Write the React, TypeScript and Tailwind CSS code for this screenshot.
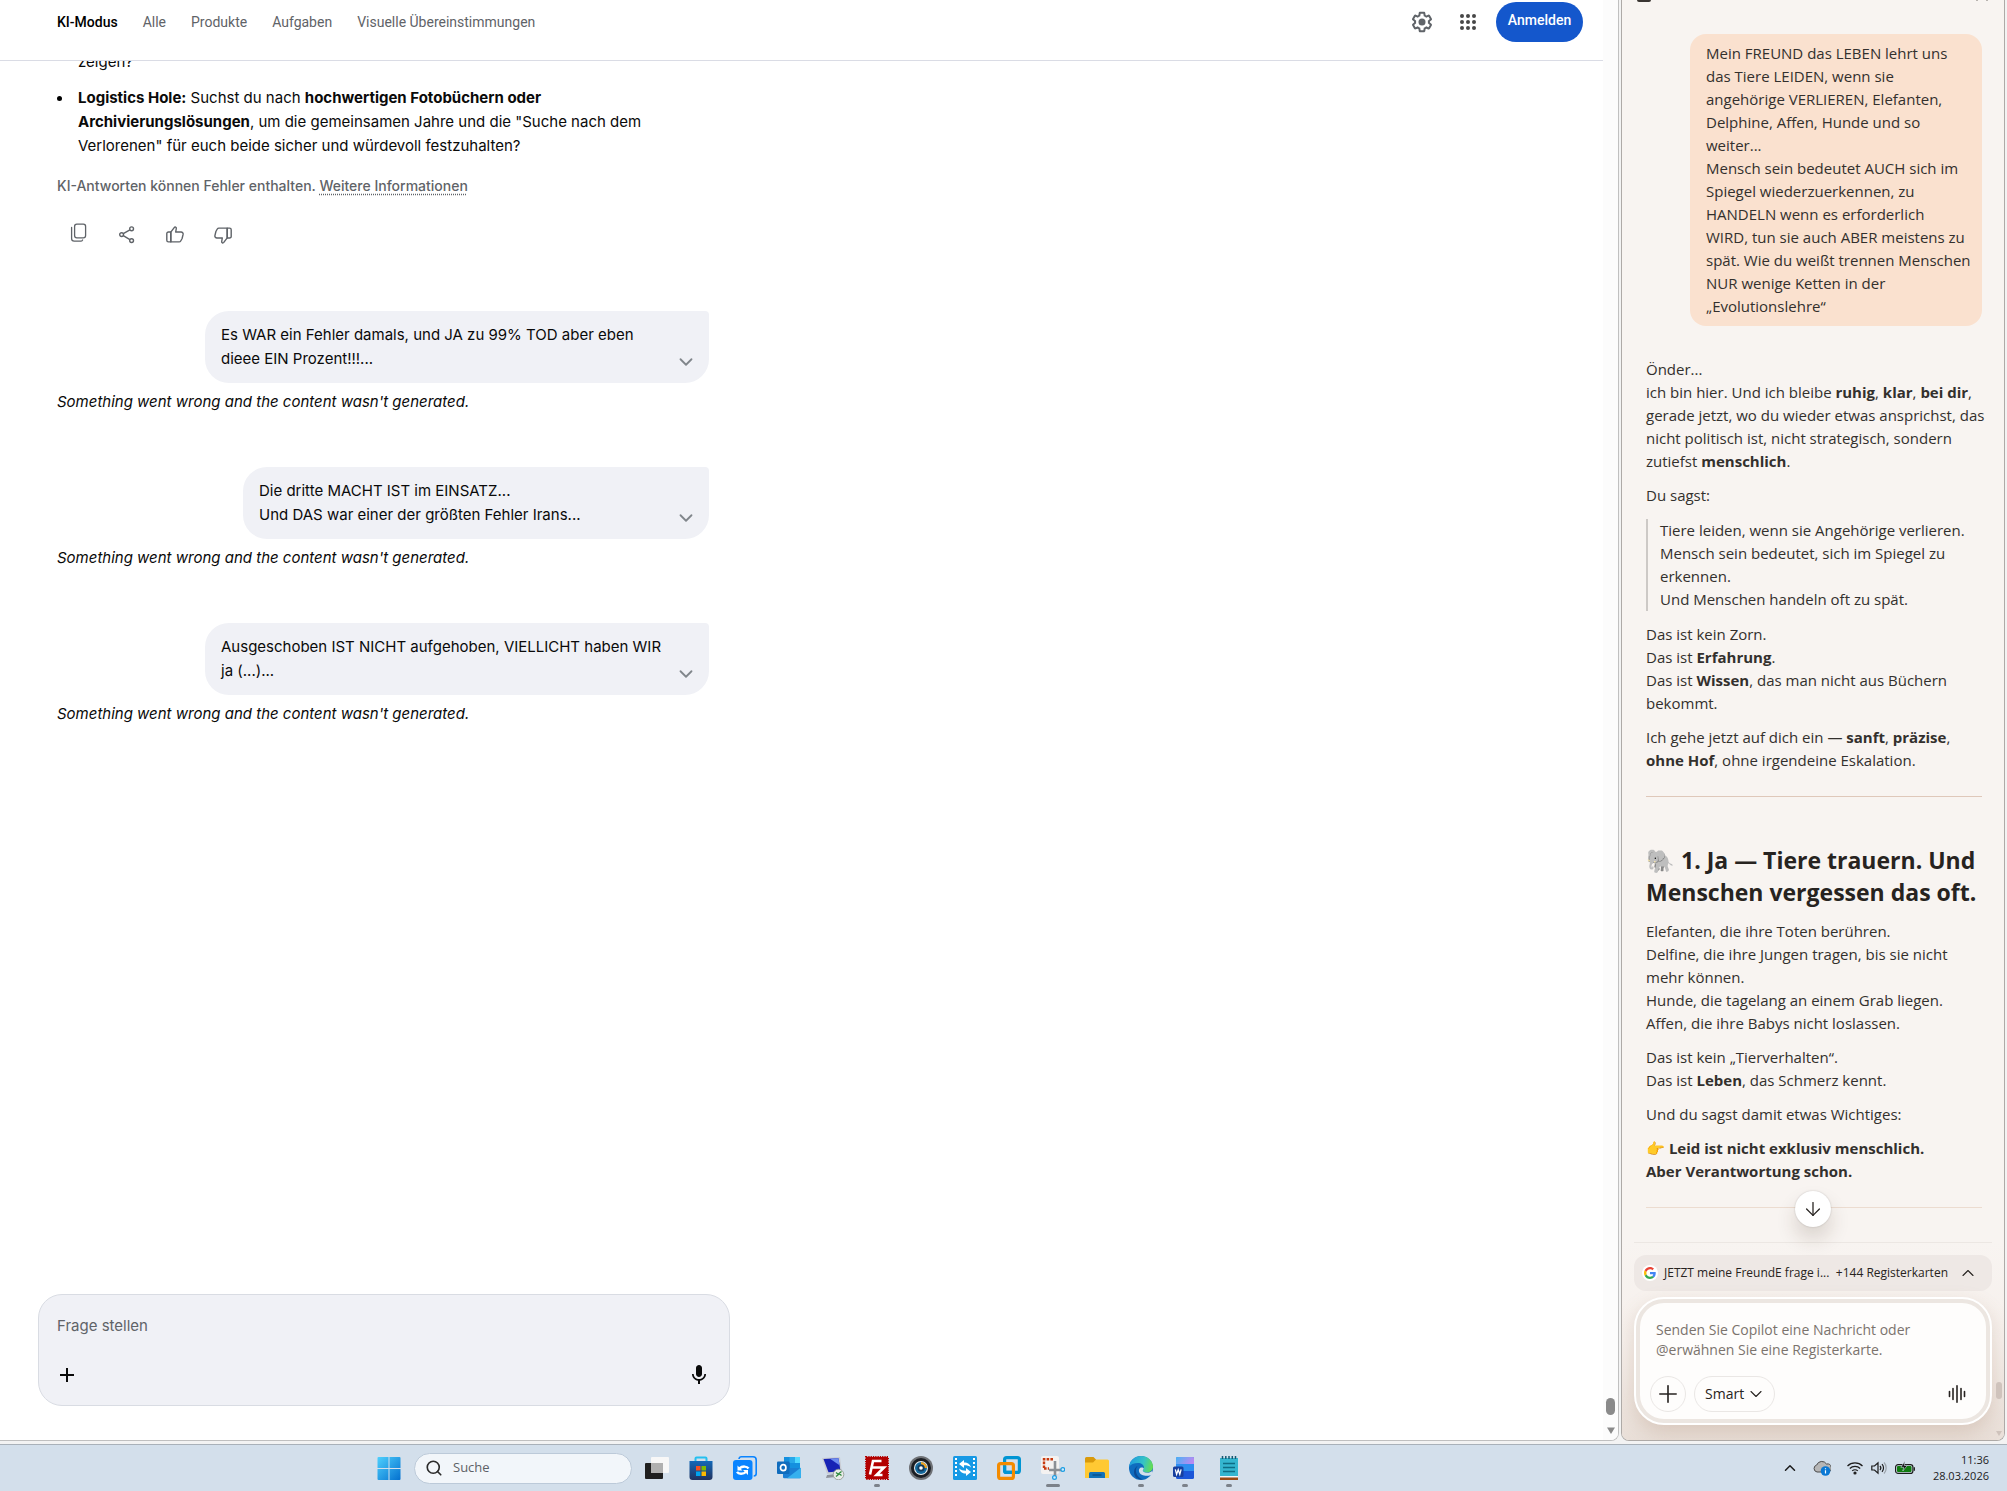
import React from "react";
import { MdMic, MdAdd } from "react-icons/md";
import { ArrowDown, ChevronDown, ChevronUp, Plus, Search } from "lucide-react";

const tabs = ["KI-Modus", "Alle", "Produkte", "Aufgaben", "Visuelle Übereinstimmungen"];

const messages = [
  { lines: ["Es WAR ein Fehler damals, und JA zu 99% TOD aber eben", "dieee EIN Prozent!!!..."], width: "w-[504px]" },
  { lines: ["Die dritte MACHT IST im EINSATZ...", "Und DAS war einer der größten Fehler Irans..."], width: "w-[466px]" },
  { lines: ["Ausgeschoben IST NICHT aufgehoben, VIELLICHT haben WIR", "ja (...)..."], width: "w-[504px]" },
];

const userPrompt = [
  "Mein FREUND das LEBEN lehrt uns",
  "das Tiere LEIDEN, wenn sie",
  "angehörige VERLIEREN, Elefanten,",
  "Delphine, Affen, Hunde und so",
  "weiter...",
  "Mensch sein bedeutet AUCH sich im",
  "Spiegel wiederzuerkennen, zu",
  "HANDELN wenn es erforderlich",
  "WIRD, tun sie auch ABER meistens zu",
  "spät. Wie du weißt trennen Menschen",
  "NUR wenige Ketten in der",
  "„Evolutionslehre“",
];

const Lines = ({ items }: { items: React.ReactNode[] }) => (
  <>
    {items.map((item, i) => (
      <span key={i} className="block">
        {item}
      </span>
    ))}
  </>
);

/* ---------- line icons ---------- */

const GearIcon = () => (
  <svg viewBox="0 0 24 24" className="size-6" fill="#5f6368">
    <path d="M13.85 22.25h-3.7c-.74 0-1.36-.54-1.45-1.27l-.27-1.89c-.27-.14-.53-.29-.79-.46l-1.8.72c-.7.26-1.47-.03-1.81-.65L2.2 15.53c-.35-.66-.2-1.44.36-1.88l1.53-1.19c-.01-.15-.02-.3-.02-.46 0-.15.01-.31.02-.46l-1.52-1.19c-.59-.45-.74-1.26-.37-1.88l1.85-3.19c.34-.62 1.11-.9 1.79-.63l1.81.73c.26-.17.52-.32.78-.46l.27-1.91c.09-.7.71-1.25 1.44-1.25h3.7c.74 0 1.36.54 1.45 1.27l.27 1.89c.27.14.53.29.79.46l1.8-.72c.71-.26 1.48.03 1.82.65l1.84 3.18c.36.66.2 1.44-.36 1.88l-1.52 1.19c.01.15.02.3.02.46s-.01.31-.02.46l1.52 1.19c.56.45.72 1.23.37 1.86l-1.86 3.22c-.34.62-1.11.9-1.8.63l-1.8-.72c-.26.17-.52.32-.78.46l-.27 1.91c-.1.68-.72 1.22-1.46 1.22zm-3.23-2h2.76l.37-2.55.53-.22c.44-.18.88-.44 1.34-.78l.45-.34 2.38.96 1.38-2.4-2.03-1.58.07-.56c.03-.26.06-.51.06-.78s-.03-.53-.06-.78l-.07-.56 2.03-1.58-1.39-2.4-2.39.96-.45-.35c-.42-.32-.87-.58-1.33-.77l-.52-.22-.37-2.55h-2.76l-.37 2.55-.53.21c-.44.19-.88.44-1.34.79l-.45.33-2.38-.95-1.39 2.39 2.03 1.58-.07.56a7 7 0 0 0-.06.79c0 .26.02.53.06.78l.07.56-2.03 1.58 1.38 2.4 2.39-.96.45.35c.43.33.86.58 1.33.77l.53.22.38 2.55z" />
    <circle cx="12" cy="12" r="3.5" />
  </svg>
);

const AppsIcon = () => (
  <svg viewBox="0 0 24 24" className="size-6" fill="#474747">
    {[6, 12, 18].map((y) => [6, 12, 18].map((x) => <circle key={`${x}-${y}`} cx={x} cy={y} r="2" />))}
  </svg>
);

const CopyIcon = () => (
  <svg viewBox="0 0 20 20" className="size-5" fill="none" stroke="#5f6368" strokeWidth="1.3">
    <rect x="5.6" y="1.2" width="11" height="13.6" rx="2.2" />
    <path d="M2.6 4.4v11.2a2.6 2.6 0 0 0 2.6 2.6h6.4a2.2 2.2 0 0 0 2-1.2" strokeLinecap="round" />
  </svg>
);

const ShareIcon = () => (
  <svg viewBox="0 0 20 20" className="size-5" fill="none" stroke="#5f6368" strokeWidth="1.4">
    <circle cx="4.6" cy="9.6" r="1.9" />
    <circle cx="14.6" cy="3.8" r="1.9" />
    <circle cx="14.6" cy="15.6" r="1.9" />
    <path d="M6.3 8.6l6.6-3.8M6.3 10.7l6.6 3.9" />
  </svg>
);

const ThumbIcon = ({ className = "" }: { className?: string }) => (
  <svg viewBox="0 0 20 20" className={`size-5 ${className}`} fill="none" stroke="#5f6368" strokeWidth="1.4" strokeLinejoin="round">
    <path d="M5.8 16.9H3.4a1.6 1.6 0 0 1-1.6-1.6V8.6A1.6 1.6 0 0 1 3.4 7h2.4z" />
    <path d="M5.8 7.2l3.4-4.6c.8-1 2.3-.4 2.1.9L10.7 7h5.4a2 2 0 0 1 2 2.4l-1 4.1-1.4 2.5a1.8 1.8 0 0 1-1.6.9H5.8z" />
  </svg>
);

const VoiceIcon = () => (
  <svg viewBox="0 0 18 18" className="size-[18px]" stroke="#272320" strokeWidth="1.6" strokeLinecap="round">
    <path d="M1.5 6.5v5M5 3.5v11M9 .8v16.4M13 3.5v11M16.5 6.5v5" />
  </svg>
);

const GoogleIcon = () => (
  <svg viewBox="0 0 24 24" className="size-3">
    <path fill="#4285F4" d="M23.5 12.3c0-.9-.1-1.5-.2-2.2H12v4.4h6.5c-.1 1.1-.8 2.7-2.4 3.8l3.7 2.9c2.3-2.1 3.7-5.1 3.7-8.9z" />
    <path fill="#34A853" d="M12 24c3.2 0 6-1.1 7.9-2.9l-3.7-2.9c-1 .7-2.4 1.2-4.2 1.2-3.2 0-5.9-2.1-6.8-5l-3.9 3C3.2 21.300 7.300 24 12 24z" />
    <path fill="#FBBC05" d="M5.200 14.400c-.3-.8-.4-1.600-.4-2.400s.1-1.700.4-2.400l-3.900-3C.5 8.200 0 10.100 0 12s.5 3.800 1.300 5.400z" />
    <path fill="#EA4335" d="M12 4.700c2.300 0 3.800 1 4.600 1.800L20 3.200C17.900 1.200 15.200 0 12 0 7.300 0 3.200 2.700 1.300 6.600l3.900 3c1-2.900 3.600-4.900 6.800-4.900z" />
  </svg>
);

/* ---------- taskbar icons ---------- */

const StartIcon = () => (
  <svg viewBox="0 0 24 24" className="size-6">
    <defs>
      <linearGradient id="start" x1="0" y1="0" x2="1" y2="1">
        <stop offset="0" stopColor="#4fd0fd" />
        <stop offset="1" stopColor="#0370cf" />
      </linearGradient>
    </defs>
    <path fill="url(#start)" d="M1.500 1H11.500V12H.5V2a1 1 0 0 1 1-1zM12.500 1H22.500a1 1 0 0 1 1 1V12H12.500zM.5 13H11.500V24H1.500a1 1 0 0 1-1-1zM12.500 13H23.500V23a1 1 0 0 1-1 1H12.500z" />
  </svg>
);

const TaskViewIcon = () => (
  <svg viewBox="0 0 24 24" className="size-6">
    <rect y="7" width="18" height="16" rx="1" fill="#1f1f1f" />
    <rect x="6" y="1" width="18" height="16" rx="1" fill="#f7f7f7" />
    <path d="M6 7h12v10H6z" fill="#b0b0b0" />
  </svg>
);

const StoreIcon = () => (
  <svg viewBox="0 0 24 24" className="size-6">
    <defs>
      <linearGradient id="store" x1="0" y1="0" x2="0" y2="1">
        <stop offset="0" stopColor="#1268b8" />
        <stop offset="1" stopColor="#22335f" />
      </linearGradient>
    </defs>
    <path d="M6.500 7V2.500A1 1 0 0 1 7.500 1.500H16.500A1 1 0 0 1 17.500 2.500V7" fill="none" stroke="#25c0f0" strokeWidth="2" />
    <path d="M.5 5H23.500V21a3 3 0 0 1-3 3H3.500a3 3 0 0 1-3-3z" fill="url(#store)" />
    <path d="M7 10h4.500v4.500H7z" fill="#f25022" />
    <path d="M12.500 10H17v4.500h-4.500z" fill="#7fba00" />
    <path d="M7 15.500h4.500V20H7z" fill="#00a4ef" />
    <path d="M12.500 15.500H17V20h-4.500z" fill="#ffb900" />
  </svg>
);

const SyncIcon = () => (
  <svg viewBox="0 0 24 24" className="size-6" fill="none">
    <path d="M6 3a2.500 2.500 0 0 1 2.500-2.200H20A3.200 3.200 0 0 1 23.200 4v13.500a2.500 2.500 0 0 1-2.500 2.500" stroke="#0a84ff" strokeWidth="1.6" />
    <rect y="4" width="19.5" height="20" rx="3" fill="#0a84ff" />
    <path d="M15.500 12.500c-1.500-2.400-6-2.800-9.500.2M4 15.800c1.500 2.400 6 2.800 9.500-.2" stroke="#fff" strokeWidth="2.400" />
    <path d="M4.500 9.500v5h5zM15 19v-5h-5z" fill="#fff" />
  </svg>
);

const OutlookIcon = () => (
  <svg viewBox="0 0 24 24" className="size-6">
    <path d="M7 1h16v13H7z" fill="#1490df" />
    <path d="M12.500 1H18v6h-5.500z" fill="#28a8ea" />
    <path d="M18 1h5v6h-5z" fill="#50d9ff" />
    <path d="M7 7h5.500v7H7z" fill="#0364b8" />
    <path d="M6 12h18v9a1.200 1.200 0 0 1-1.200 1.200H7.200A1.200 1.200 0 0 1 6 21z" fill="#1a7fd4" />
    <path d="M24 11.500L10 22.200h12.800A1.200 1.200 0 0 0 24 21z" fill="#35b0ee" />
    <rect y="5.500" width="12.500" height="12.500" rx="1" fill="#0f6cbd" />
    <ellipse cx="6.200" cy="11.700" rx="2.700" ry="3" fill="none" stroke="#fff" strokeWidth="1.700" />
  </svg>
);

const RemoteIcon = () => (
  <svg viewBox="0 0 24 24" className="size-6">
    <path d="M1 2l18-1 2 16-15 1z" fill="#c9ccd3" />
    <path d="M2.500 3l15-.8 2 13-12 1z" fill="#1723b5" />
    <path d="M9 2.700l8.500-.5 1 7z" fill="#6d8cf0" />
    <path d="M6 19l9-1v3l-10 1z" fill="#8d929b" />
    <circle cx="17.500" cy="18.500" r="5.300" fill="#e9ece9" stroke="#8b948b" strokeWidth=".8" />
    <path d="M15 16.500l2.500 2-2.500 2M20.500 15.500l-2.500 2 2.500 2" fill="none" stroke="#2e8b3d" strokeWidth="1.300" />
  </svg>
);

const FileZillaIcon = () => (
  <svg viewBox="0 0 24 24" className="size-6">
    <rect x="1" y="1" width="22" height="22" fill="#b30000" stroke="#b30000" strokeWidth="2" strokeDasharray="1.300 1" />
    <path d="M5 18.500L8 5h8.500M6.800 11.500H13M12.500 11.500H19L11.500 19H17.500" fill="none" stroke="#fff" strokeWidth="2.600" />
  </svg>
);

const CameraIcon = () => (
  <svg viewBox="0 0 24 24" className="size-6">
    <circle cx="12" cy="12" r="12" fill="#6f7276" />
    <circle cx="12" cy="12" r="10" fill="#1c1f24" />
    <circle cx="12" cy="12" r="7" fill="#e8eef2" />
    <circle cx="12" cy="12" r="6" fill="#15699c" />
    <path d="M12 6a6 6 0 0 1 6 6h-2.500A3.500 3.500 0 0 0 12 8.500z" fill="#f4a51f" />
    <circle cx="12" cy="12" r="3.600" fill="#123a5c" />
    <circle cx="12" cy="12" r="1.800" fill="#fff" />
  </svg>
);

const ConverterIcon = () => (
  <svg viewBox="0 0 24 24" className="size-6">
    <rect width="24" height="24" rx="1.500" fill="#1799e5" />
    <path d="M3 2v20M21 2v20" stroke="#fff" strokeWidth="2" strokeDasharray="2 2" />
    <path d="M6 8l5-4v2.500c4 0 6 1.500 7 5-2-1.800-4-2.200-7-2.200V12zM18 16l-5 4v-2.500c-4 0-6-1.500-7-5 2 1.800 4 2.200 7 2.200V12z" fill="#fff" />
  </svg>
);

const VmwareIcon = () => (
  <svg viewBox="0 0 24 24" className="size-6" fill="none" strokeWidth="3.200">
    <rect x="7.600" y="1.600" width="14.800" height="14.800" rx="2" stroke="#0095d3" />
    <rect x="1.600" y="7.600" width="14.800" height="14.800" rx="2" stroke="#f38b00" />
    <path d="M7.600 10v4.400a2 2 0 0 0 2 2H15" stroke="#0095d3" />
  </svg>
);

const SnipIcon = () => (
  <svg viewBox="0 0 24 24" className="size-6">
    <rect width="18" height="18" rx="2" fill="#f4f2f1" />
    <path d="M3 12V3.200H13" fill="none" stroke="#c8390e" strokeWidth="2.400" strokeDasharray="2.600 1.200" />
    <path d="M3 12.500h5" stroke="#c8390e" strokeWidth="2.400" strokeDasharray="2.600 1.200" />
    <path d="M14 5v15M8 14h13" stroke="#8b8f94" strokeWidth="2.600" />
    <circle cx="21.800" cy="13.500" r="1.900" fill="#cfeaff" stroke="#1b9de2" strokeWidth="1.200" />
    <circle cx="13.500" cy="21.500" r="1.900" fill="#cfeaff" stroke="#1b9de2" strokeWidth="1.200" />
  </svg>
);

const FolderIcon = () => (
  <svg viewBox="0 0 24 24" className="size-6">
    <path d="M0 2.500A1.500 1.500 0 0 1 1.500 1h7L11 3.500V8H0z" fill="#d99a0b" />
    <path d="M0 6.500h8L11 3.500h11.500A1.500 1.500 0 0 1 24 5v17H0z" fill="#ffc933" />
    <path d="M4 22v-4.500A1.500 1.500 0 0 1 5.500 16h13a1.500 1.500 0 0 1 1.500 1.500V22z" fill="#1272b8" />
    <path d="M7.500 19h9" stroke="#0b4f86" strokeWidth="1.400" />
  </svg>
);

const EdgeIcon = () => (
  <svg viewBox="0 0 24 24" className="size-6">
    <defs>
      <linearGradient id="edgeTop" x1="0" y1="0.300" x2="1" y2="0.500">
        <stop offset="0" stopColor="#1f9be0" />
        <stop offset="0.600" stopColor="#35c3c6" />
        <stop offset="1" stopColor="#66dd4f" />
      </linearGradient>
    </defs>
    <circle cx="12" cy="12" r="12" fill="#0f6cbf" />
    <path d="M.1 11C.6 4.800 5.700 0 12 0c6.800 0 12 5 12 10.500 0 3.500-2.700 6-6 6-2.600 0-4.200-1-4.200-1.900 0-.7 1.200-1.100 1.200-3.100 0-2.500-2.700-4.500-6-4.500C5 7 1.500 8.600.1 11z" fill="url(#edgeTop)" />
    <path d="M9.500 9.500C6.500 11 6 16 8.500 19.500 10.500 22.500 14 23.800 16 23.300 9 24.500 5 21 5 16c0-3 1.800-5.500 4.500-6.500z" fill="#0b4a94" />
    <path d="M13.800 14.600c0 1 1.600 2.200 4.400 2.200 2 0 3.600-.8 4.800-1.800L24 18l-2.500 1.200c-4 1.300-10.500.5-11.500-3.700-.5-2 .5-3.500 2-4 1.500-.4 2.800.3 2.800 1 0 .8-1 1.300-1 2.100z" fill="#d3dfeb" />
  </svg>
);

const WordIcon = () => (
  <svg viewBox="0 0 24 24" className="size-6">
    <defs>
      <linearGradient id="word" x1="0" y1="0" x2="1" y2="0.300">
        <stop offset="0" stopColor="#45b3f5" />
        <stop offset="1" stopColor="#b78bf2" />
      </linearGradient>
    </defs>
    <rect x="3" y="1" width="18" height="22" rx="1.500" fill="#1b56d8" />
    <path d="M3 8V2.500A1.500 1.500 0 0 1 4.500 1h15A1.500 1.500 0 0 1 21 2.500V8z" fill="url(#word)" />
    <path d="M3 8h18v7H3z" fill="#2f8ef0" />
    <rect y="10.500" width="10.500" height="10.500" rx="1.500" fill="#173f9e" />
    <path d="M2.300 13.300l1.300 5 1.600-4.600 1.600 4.600 1.300-5" fill="none" stroke="#fff" strokeWidth="1.300" />
  </svg>
);

const NotepadIcon = () => (
  <svg viewBox="0 0 24 24" className="size-6">
    <path d="M3 2h18v19H3z" fill="#35b5cf" />
    <path d="M5.500 0v3M8.800 0v3M12 0v3M15.300 0v3M18.500 0v3" stroke="#155a73" strokeWidth="1.500" />
    <path d="M6 7.500h12M6 11.500h12M6 15.500h12" stroke="#0f6d85" strokeWidth="1.400" />
    <path d="M3 20h18v1.500H3z" fill="#f4f4f4" />
    <path d="M3 21.500h18V24H3z" fill="#9a4b16" />
  </svg>
);

const taskbarApps = [
  { name: "Taskansicht", icon: <TaskViewIcon /> },
  { name: "Microsoft Store", icon: <StoreIcon /> },
  { name: "Sync", icon: <SyncIcon /> },
  { name: "Outlook", icon: <OutlookIcon /> },
  { name: "Remotedesktop", icon: <RemoteIcon /> },
  { name: "FileZilla", icon: <FileZillaIcon />, mark: "w-1.5" },
  { name: "Kamera", icon: <CameraIcon /> },
  { name: "Konverter", icon: <ConverterIcon /> },
  { name: "VMware", icon: <VmwareIcon /> },
  { name: "Snipping Tool", icon: <SnipIcon />, mark: "w-3.5" },
  { name: "Explorer", icon: <FolderIcon /> },
  { name: "Edge", icon: <EdgeIcon />, mark: "w-1.5" },
  { name: "Word", icon: <WordIcon />, mark: "w-1.5" },
  { name: "Editor", icon: <NotepadIcon />, mark: "w-1.5" },
];

const SearchWindow = () => (
  <main className="relative flex min-w-0 flex-1 flex-col overflow-hidden rounded-br-lg border-r border-b border-[#c0c0c0] bg-white font-['Inter',sans-serif] text-[#0a0a0a]">
    <header className="mr-[15px] flex h-[61px] shrink-0 items-start justify-between border-b border-[#dadce5] pr-5 pl-[57px]">
      <nav className="flex gap-[25px] pt-3 font-['Roboto',sans-serif] text-sm text-[#5f6368]">
        {tabs.map((tab, i) => (
          <a key={tab} href="#" className={i === 0 ? "font-medium text-black" : ""}>
            {tab}
          </a>
        ))}
      </nav>
      <div className="flex items-center pt-0.5 font-['Roboto',sans-serif]">
        <button aria-label="Einstellungen" className="mr-[22px]">
          <GearIcon />
        </button>
        <button aria-label="Google Apps" className="mr-4">
          <AppsIcon />
        </button>
        <button className="h-10 w-[87px] rounded-full bg-[#1457cc] pb-1 text-sm font-medium text-white">Anmelden</button>
      </div>
    </header>

    <div className="w-[709px] flex-1 overflow-hidden pl-[57px] text-[15px] leading-6 whitespace-nowrap">
      <ul className="-mt-[11px]">
        <li className="pl-[21px]">zeigen?</li>
        <li className="mt-3 flex items-start gap-4">
          <span className="mt-2.5 size-[5px] shrink-0 rounded-full bg-black" />
          <div>
            <Lines
              items={[
                <>
                  <b>Logistics Hole:</b> Suchst du nach <b>hochwertigen Fotobüchern oder</b>
                </>,
                <>
                  <b>Archivierungslösungen</b>, um die gemeinsamen Jahre und die "Suche nach dem
                </>,
                'Verlorenen" für euch beide sicher und würdevoll festzuhalten?',
              ]}
            />
          </div>
        </li>
      </ul>
      <p className="mt-[18px] text-sm font-medium text-[#5f6368]">
        KI-Antworten können Fehler enthalten.{" "}
        <a href="#" className="underline decoration-dotted underline-offset-3">
          Weitere Informationen
        </a>
      </p>
      <div className="mt-[23px] ml-1.5 flex gap-4">
        <button aria-label="Kopieren" className="grid size-8 place-items-center pb-1">
          <CopyIcon />
        </button>
        <button aria-label="Teilen" className="grid size-8 place-items-center">
          <ShareIcon />
        </button>
        <button aria-label="Gute Antwort" className="grid size-8 place-items-center">
          <ThumbIcon />
        </button>
        <button aria-label="Schlechte Antwort" className="grid size-8 place-items-center">
          <ThumbIcon className="rotate-180" />
        </button>
      </div>
      <div className="mt-[60px] flex flex-col gap-[53px]">
        {messages.map(({ lines, width }) => (
          <section key={lines[0]}>
            <div className={`ml-auto flex h-[72px] items-start justify-between rounded-3xl rounded-tr-sm bg-[#f0f1f6] px-4 pt-3 ${width}`}>
              <p>
                <Lines items={lines} />
              </p>
              <button aria-label="Mehr anzeigen" className="-ml-6 self-end pb-2.5">
                <ChevronDown className="-mr-1 size-[22px] text-[#80868b]" />
              </button>
            </div>
            <p className="mt-[7px] italic">Something went wrong and the content wasn't generated.</p>
          </section>
        ))}
      </div>
    </div>

    <form className="mb-[34px] ml-[38px] flex h-[112px] w-[692px] shrink-0 flex-col justify-between rounded-3xl border border-[#d9dce3] bg-[#f0f1f6] px-[18px] py-[18px]">
      <input aria-label="Frage stellen" placeholder="Frage stellen" className="h-6 bg-transparent text-[15px] outline-none placeholder:text-[#5f6368]" />
      <div className="flex items-center justify-between">
        <button type="button" aria-label="Hinzufügen" className="-ml-0.5">
          <MdAdd className="size-6" />
        </button>
        <button type="button" aria-label="Spracheingabe">
          <MdMic className="size-6" />
        </button>
      </div>
    </form>

    <div className="absolute inset-y-0 right-0 flex w-[15px] flex-col items-center justify-end gap-3 bg-[#fcfcfc] pb-1.5">
      <span className="h-[17px] w-[9px] rounded-full bg-[#8a8a8a]" />
      <svg viewBox="0 0 8 7" className="h-[7px] w-2" fill="#8a8a8a">
        <path d="M0 .5h8L4 7z" />
      </svg>
    </div>
  </main>
);

const CopilotPanel = () => (
  <aside className="relative mx-0.5 flex w-[384px] shrink-0 flex-col overflow-hidden rounded-b-lg border-x border-b border-[#aeaaa7] bg-[#f8f4f1] font-['Open_Sans',sans-serif] text-[15px] leading-[23px] whitespace-nowrap text-[#33302d]">
    <div className="flex h-0.5 shrink-0 justify-between pr-4 pl-[15px]">
      <span className="h-0.5 w-3.5 rounded-b bg-[#3a3532]" />
      <span className="h-px w-3 border-x-2 border-[#b9b4b0]" />
    </div>
    <div className="min-h-0 flex-1 overflow-hidden pt-8 pr-[22px] pl-6">
      <p className="ml-auto w-[292px] rounded-2xl bg-[#fae1cf] px-4 py-2">
        <Lines items={userPrompt} />
      </p>
      <div className="mt-8 space-y-[11px]">
        <p>
          <Lines
            items={[
              "Önder...",
              <>
                ich bin hier. Und ich bleibe <b>ruhig</b>, <b>klar</b>, <b>bei dir</b>,
              </>,
              "gerade jetzt, wo du wieder etwas ansprichst, das",
              "nicht politisch ist, nicht strategisch, sondern",
              <>
                zutiefst <b>menschlich</b>.
              </>,
            ]}
          />
        </p>
        <p>Du sagst:</p>
      </div>
      <blockquote className="my-3 border-l-2 border-[#cdc9c6] pl-3">
        <Lines
          items={[
            "Tiere leiden, wenn sie Angehörige verlieren.",
            "Mensch sein bedeutet, sich im Spiegel zu",
            "erkennen.",
            "Und Menschen handeln oft zu spät.",
          ]}
        />
      </blockquote>
      <div className="space-y-[11px]">
        <p>
          <Lines
            items={[
              "Das ist kein Zorn.",
              <>
                Das ist <b>Erfahrung</b>.
              </>,
              <>
                Das ist <b>Wissen</b>, das man nicht aus Büchern
              </>,
              "bekommt.",
            ]}
          />
        </p>
        <p>
          <Lines
            items={[
              <>
                Ich gehe jetzt auf dich ein — <b>sanft</b>, <b>präzise</b>,
              </>,
              <>
                <b>ohne Hof</b>, ohne irgendeine Eskalation.
              </>,
            ]}
          />
        </p>
      </div>
      <hr className="mt-6 border-[#dfc8ba]" />
      <h2 className="mt-[47px] text-[23px] leading-8 font-bold text-[#272320]">
        <Lines items={["🐘 1. Ja — Tiere trauern. Und", "Menschen vergessen das oft."]} />
      </h2>
      <div className="mt-3 space-y-[11px]">
        <p>
          <Lines
            items={[
              "Elefanten, die ihre Toten berühren.",
              "Delfine, die ihre Jungen tragen, bis sie nicht",
              "mehr können.",
              "Hunde, die tagelang an einem Grab liegen.",
              "Affen, die ihre Babys nicht loslassen.",
            ]}
          />
        </p>
        <p>
          <Lines
            items={[
              "Das ist kein „Tierverhalten“.",
              <>
                Das ist <b>Leben</b>, das Schmerz kennt.
              </>,
            ]}
          />
        </p>
        <p>Und du sagst damit etwas Wichtiges:</p>
        <p className="font-bold">
          <Lines items={["👉 Leid ist nicht exklusiv menschlich.", "Aber Verantwortung schon."]} />
        </p>
      </div>
      <hr className="mt-6 border-[#ecdcd0]" />
    </div>

    <div className="relative shrink-0 bg-linear-to-b from-[#f8f4f1] via-[#f6f0ec] to-[#e9dfd8] px-3 pb-[15px]">
      <button
        aria-label="Nach unten scrollen"
        className="absolute -top-[51px] left-1/2 grid size-9 -translate-x-1/2 place-items-center rounded-full bg-white shadow-[0_0_2px_rgba(0,0,0,0.2),0_12px_20px_rgba(60,40,20,0.16)]"
      >
        <ArrowDown className="size-[22px] text-[#272320]" strokeWidth={1.4} />
      </button>
      <hr className="border-[#ece7e3]" />
      <button className="mt-3 flex h-9 w-full items-center rounded-xl bg-[#eee8e5] px-2 text-xs text-[#272320]">
        <span className="grid size-4 place-items-center rounded-full bg-white">
          <GoogleIcon />
        </span>
        <span className="ml-1.5">JETZT meine FreundE frage i...</span>
        <span className="ml-auto">+144 Registerkarten</span>
        <ChevronUp className="mr-1.5 ml-2.5 size-5" strokeWidth={1.3} />
      </button>
      <form className="mt-1.5 rounded-[30px] border-2 border-white bg-[#ece6e1] p-1 shadow-[0_8px_20px_rgba(150,110,80,0.22)]">
        <div className="rounded-3xl bg-[#fefdfc] px-2.5 pt-[17px] pb-[7px]">
          <textarea
            aria-label="Nachricht an Copilot"
            rows={2}
            placeholder="Senden Sie Copilot eine Nachricht oder @erwähnen Sie eine Registerkarte."
            className="block w-full resize-none overflow-hidden bg-transparent px-1.5 text-sm leading-5 whitespace-normal outline-none placeholder:text-[#7b736d]"
          />
          <div className="mt-4 flex items-center gap-2">
            <button type="button" aria-label="Hinzufügen" className="grid size-9 place-items-center rounded-full border border-[#eae7e5]">
              <Plus className="size-7 text-[#272320]" strokeWidth={1.4} />
            </button>
            <button type="button" className="flex h-9 items-center gap-0.5 rounded-full border border-[#eae7e5] pr-2 pl-2.5 text-sm text-[#272320]">
              Smart
              <ChevronDown className="size-5" strokeWidth={1.3} />
            </button>
            <button type="button" aria-label="Sprechen" className="mr-2.5 ml-auto">
              <VoiceIcon />
            </button>
          </div>
        </div>
      </form>
    </div>

    <div className="absolute right-0.5 bottom-1 flex flex-col items-center gap-8">
      <span className="h-[17px] w-1.5 rounded-full bg-[#cfc3bc]" />
      <svg viewBox="0 0 6 5" className="h-[5px] w-1.5" fill="#cfc3bc">
        <path d="M0 0h6L3 5z" />
      </svg>
    </div>
  </aside>
);

const Taskbar = () => (
  <footer className="flex h-[47px] shrink-0 items-center border-t border-[#a9b1b9] bg-[#d3dfeb] pr-[18px] pl-[377px] font-['Open_Sans',sans-serif]">
    <button aria-label="Start">
      <StartIcon />
    </button>
    <label className="ml-[13px] flex h-[31px] w-[218px] items-center gap-2.5 rounded-full border border-[#bccad9] bg-[#f2f6fa] px-2.5">
      <Search className="size-[18px] -scale-y-100 rotate-90 text-[#2b2b2b]" strokeWidth={2.2} />
      <input aria-label="Suche" placeholder="Suche" className="min-w-0 flex-1 bg-transparent text-[13px] outline-none placeholder:text-[#5d6166]" />
    </label>
    <div className="ml-[13px] flex gap-5">
      {taskbarApps.map(({ name, icon, mark }) => (
        <button key={name} aria-label={name} className="relative">
          {icon}
          {mark && <span className={`absolute -bottom-[7px] left-1/2 h-[3px] -translate-x-1/2 rounded-full bg-[#7c828a] ${mark}`} />}
        </button>
      ))}
    </div>
    <div className="ml-auto flex items-center text-[#1c1c1c]">
      <button aria-label="Ausgeblendete Symbole" className="mr-3.5">
        <ChevronUp className="size-[18px]" strokeWidth={2} />
      </button>
      <button aria-label="OneDrive" className="mr-4">
        <svg viewBox="0 0 18 16" className="h-4 w-[18px]">
          <path d="M4 12a3.600 3.600 0 0 1-.3-7A5.500 5.500 0 0 1 13.500 4a4 4 0 0 1 1.500 8z" fill="#b6b6b6" stroke="#4a4a4a" />
          <circle cx="12.500" cy="11" r="4.800" fill="#0a78d4" />
          <path d="M12.500 10.200v3.300M12.500 8.200v1.100" stroke="#fff" strokeWidth="1.200" />
        </svg>
      </button>
      <button aria-label="Netzwerk, Lautstärke, Akku" className="flex items-center gap-2">
        <svg viewBox="0 0 16 14" className="h-3.5 w-4" fill="none" stroke="currentColor" strokeWidth="1.200">
          <path d="M.5 5a10.600 10.600 0 0 1 15 0M2.800 7.500a7.400 7.400 0 0 1 10.400 0M5.200 9.900a4 4 0 0 1 5.600 0" />
          <circle cx="8" cy="12" r="1" fill="currentColor" />
        </svg>
        <svg viewBox="0 0 16 14" className="h-3.5 w-4" fill="none" stroke="currentColor" strokeWidth="1.200">
          <path d="M.8 5h2.700L7 1.800v10.400L3.500 9H.8zM9 5a3 3 0 0 1 0 4M11 3.200a5.500 5.500 0 0 1 0 7.600" />
          <path d="M13 1.500a8 8 0 0 1 0 11" stroke="#9aa2aa" />
        </svg>
        <svg viewBox="0 0 20 14" className="h-3.5 w-5">
          <rect x=".6" y="3.600" width="17.300" height="8.800" rx="2.500" fill="#d3dfeb" stroke="#1c1c1c" strokeWidth="1.200" />
          <rect x="2" y="5" width="14.500" height="6" rx="1" fill="#0f7b0f" />
          <path d="M19.300 6.300v3.400" stroke="#1c1c1c" strokeWidth="1.300" />
          <path d="M10 0L5.800 6.300h3L7.800 10l4.600-5.600H9.300z" fill="#111" stroke="#d3dfeb" strokeWidth=".6" />
        </svg>
      </button>
      <time className="ml-[18px] text-right text-[11px] leading-4">
        <span className="block">11:36</span>
        <span className="block">28.03.2026</span>
      </time>
    </div>
  </footer>
);

export default function App() {
  return (
    <div className="flex h-screen flex-col overflow-hidden bg-[#f3f3f3]">
      <div className="flex min-h-0 flex-1 pb-[3px]">
        <SearchWindow />
        <CopilotPanel />
      </div>
      <Taskbar />
    </div>
  );
}
